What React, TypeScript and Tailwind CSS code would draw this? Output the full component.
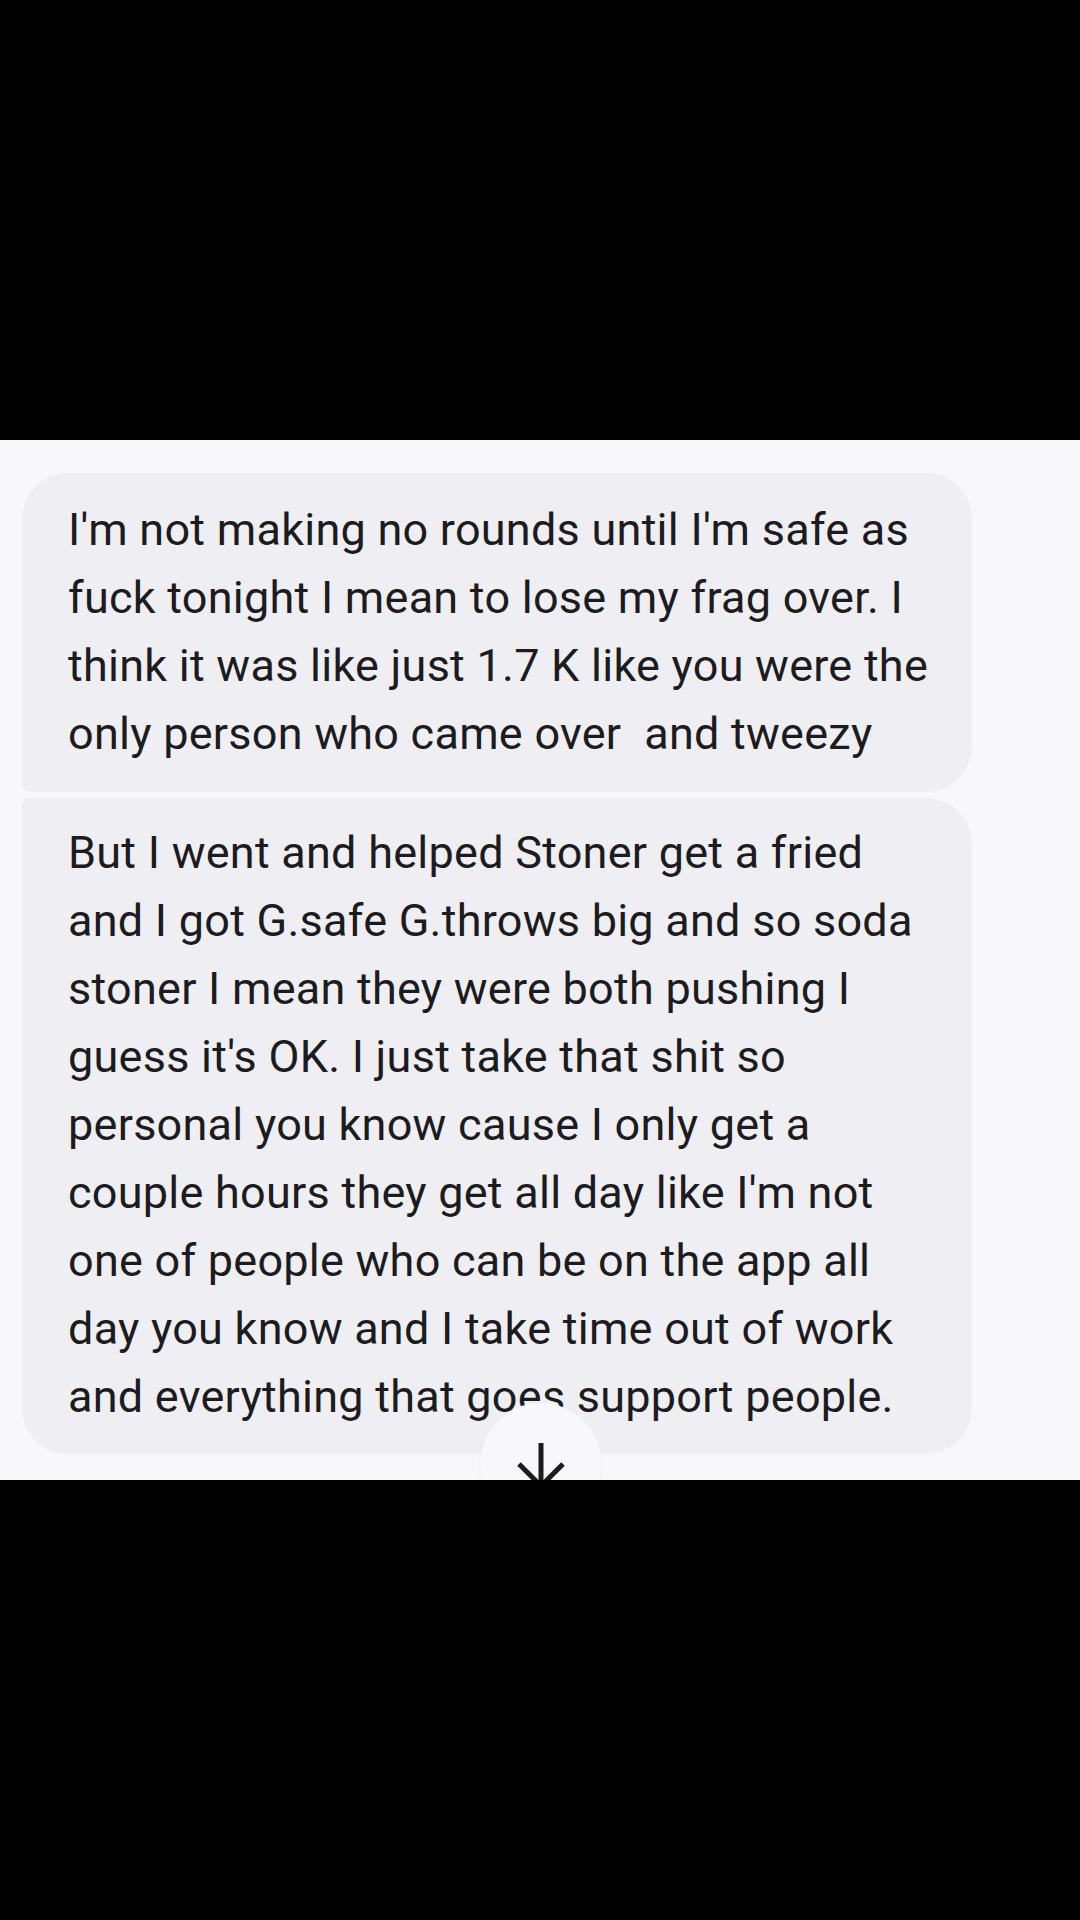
import React from "react";

const firstMessage = [
  "I'm not making no rounds until I'm safe as",
  "fuck tonight I mean to lose my frag over. I",
  "think it was like just 1.7 K like you were the",
  "only person who came over  and tweezy",
];

const secondMessage = [
  "But I went and helped Stoner get a fried",
  "and I got G.safe G.throws big and so soda",
  "stoner I mean they were both pushing I",
  "guess it's OK. I just take that shit so",
  "personal you know cause I only get a",
  "couple hours they get all day like I'm not",
  "one of people who can be on the app all",
  "day you know and I take time out of work",
  "and everything that goes support people.",
];

const Bubble = ({ lines, className }: { lines: string[]; className: string }) => (
  <div className={`w-[950px] bg-[#eeeef3] pl-[46px] ${className}`}>
    {lines.map((line, i) => (
      <div key={i} className="whitespace-pre leading-[68px] h-[68px]">
        {line}
      </div>
    ))}
  </div>
);

export default function App() {
  return (
    <div
      className="w-[1080px] h-[1920px] bg-black flex flex-col"
      style={{ fontFamily: "Roboto, 'Open Sans', sans-serif" }}
    >
      <div className="h-[440px] shrink-0" />
      <div className="relative h-[1040px] shrink-0 bg-[#f8f8fc] overflow-hidden pl-[22px] pt-[33px] flex flex-col gap-[6px] text-[45px] tracking-[0.25px] text-[#1c1b20]">
        <Bubble
          lines={firstMessage}
          className="pt-[23px] pb-[24px] rounded-tl-[46px] rounded-tr-[46px] rounded-br-[46px] rounded-bl-[8px]"
        />
        <Bubble
          lines={secondMessage}
          className="pt-[21px] pb-[23px] rounded-tl-[8px] rounded-tr-[46px] rounded-br-[46px] rounded-bl-[46px]"
        />
        <div className="absolute left-[480px] top-[963px] w-[122px] h-[122px] rounded-full bg-[#f8f8fc] shadow-[0_1px_3px_rgba(0,0,0,0.06)] flex items-start justify-center pt-[40px]">
          <svg width="48" height="50" viewBox="0 0 48 50" fill="none" stroke="#1c1b20" strokeWidth="5">
            <path d="M24 0 V44" />
            <path d="M2 21 L24 43 L46 21" />
          </svg>
        </div>
      </div>
    </div>
  );
}
